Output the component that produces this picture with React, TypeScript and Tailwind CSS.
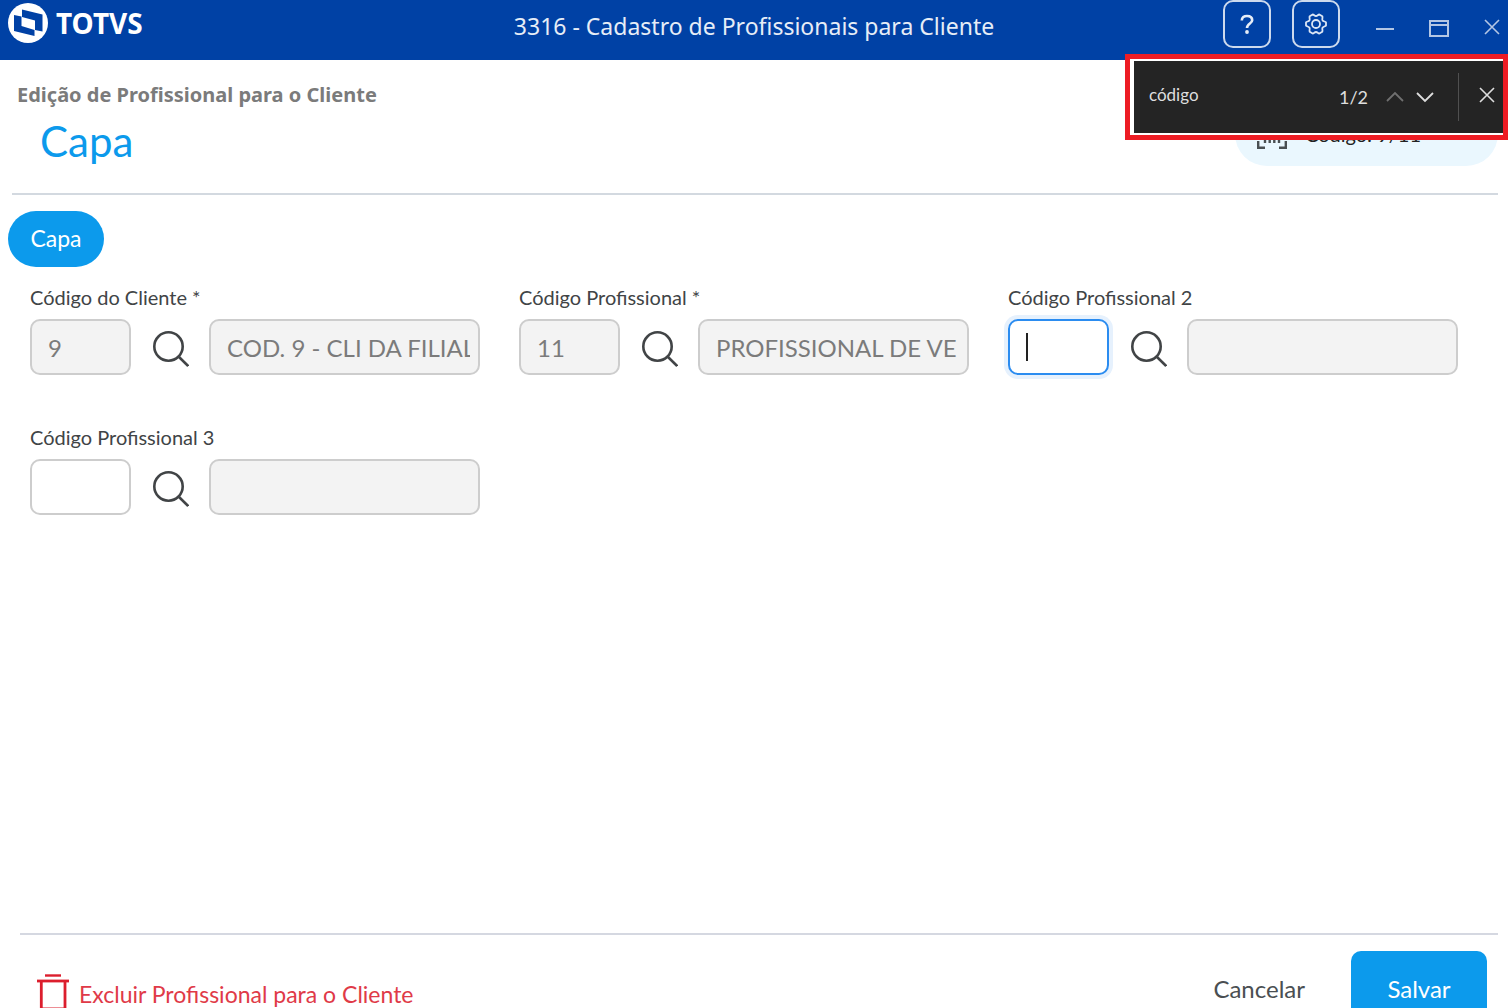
import React, { useState } from "react";

type Lookup = {
  id: string;
  label: string;
  code: string;
  description: string;
  locked?: boolean;
  focused?: boolean;
};

const lookups: Lookup[] = [
  { id: "cliente", label: "Código do Cliente *", code: "9", description: "COD. 9 - CLI DA FILIAL", locked: true },
  { id: "profissional", label: "Código Profissional *", code: "11", description: "PROFISSIONAL DE VE", locked: true },
  { id: "profissional2", label: "Código Profissional 2", code: "", description: "", focused: true },
  { id: "profissional3", label: "Código Profissional 3", code: "", description: "" },
];

const Logo = () => (
  <div className="flex items-center gap-2">
    <svg className="w-10 h-10" viewBox="0 0 40 40" aria-hidden="true">
      <circle cx="20" cy="20" r="20" fill="#fff" />
      <path d="M14 6.500 L34.500 11.500 V28.500 L27 27 V17.500 L14 14 Z" fill="#0041a5" />
      <path d="M6 12 L13.500 13.500 V23 L26.500 27 V33 L6 28 Z" fill="#0041a5" />
    </svg>
    <span className="font-['Noto_Sans',sans-serif] text-[28px] leading-10 font-bold text-white">TOTVS</span>
  </div>
);

const GearIcon = () => (
  <svg className="w-6 h-6" viewBox="0 0 24 24" fill="none" stroke="currentColor" strokeWidth="1.800" strokeLinejoin="round" aria-hidden="true">
    <path d="M8.700 2.500 C10 2.500 10.500 4 12 4 C13.500 4 14 2.500 15.300 2.500 L18.300 4.300 C19 5.600 17.800 6.900 18.500 8.200 C19.300 9.600 21 9.300 22 10.400 L22 13.600 C21 14.700 19.300 14.400 18.500 15.800 C17.800 17.100 19 18.400 18.300 19.700 L15.300 21.500 C14 21.500 13.500 20 12 20 C10.500 20 10 21.500 8.700 21.500 L5.700 19.700 C5 18.400 6.200 17.100 5.500 15.800 C4.700 14.400 3 14.700 2 13.600 L2 10.400 C3 9.300 4.700 9.600 5.500 8.200 C6.200 6.900 5 5.600 5.700 4.300 Z" />
    <circle cx="12" cy="12" r="4" />
  </svg>
);

const SearchIcon = () => (
  <svg className="w-9 h-9" viewBox="0 0 36 36" fill="none" stroke="#414446" strokeWidth="2.600" aria-hidden="true">
    <circle cx="15.500" cy="15.500" r="14.200" />
    <path d="M25.500 25.500 L35.200 35" />
  </svg>
);

const BarcodeIcon = () => (
  <svg className="w-[30px] h-[30px]" viewBox="0 0 30 30" fill="none" stroke="#4a4f52" strokeWidth="2.400" aria-hidden="true">
    <path d="M1.200 8 V1.200 H8 M22 1.200 H28.800 V8 M28.800 22 V28.800 H22 M8 28.800 H1.200 V22" />
    <path d="M8 6 V24 M12.700 6 V24 M17.300 6 V24 M22 6 V24" />
  </svg>
);

const TrashIcon = () => (
  <svg className="w-8 h-10" viewBox="0 0 32 40" fill="none" stroke="#dc1e2d" aria-hidden="true">
    <path d="M8 1.500 H24" strokeWidth="2.400" />
    <path d="M0 7 H32" strokeWidth="2.800" />
    <path d="M4.300 7 V35 H28 V7" strokeWidth="2.800" />
  </svg>
);

const TitleBar = () => (
  <header className="grid grid-cols-[1fr_auto_1fr] items-start h-[60px] shrink-0 bg-[#0041a5] text-white">
    <div className="pl-2 pt-[3px]">
      <Logo />
    </div>
    <h1 className="pt-2 font-['Noto_Sans',sans-serif] text-[23px] leading-9 text-[#e6edf7] whitespace-nowrap">
      3316 - Cadastro de Profissionais para Cliente
    </h1>
    <div className="flex items-start justify-end pr-2">
      <button aria-label="Ajuda" className="w-12 h-12 border-2 border-[#ccd9ed] rounded-[10px] flex items-center justify-center text-[#e6edf7]">
        <svg className="w-6 h-6" viewBox="0 0 24 24" fill="none" stroke="currentColor" strokeWidth="2.600" aria-hidden="true">
          <path d="M6.800 8.500 C6.800 5.400 9 4 12 4 C15.200 4 17.200 5.600 17.200 8.200 C17.200 11.600 12 11.400 12 16" />
          <circle cx="12" cy="20" r="1.900" fill="currentColor" stroke="none" />
        </svg>
      </button>
      <button aria-label="Configurações" className="w-12 h-12 ml-[21px] border-2 border-[#ccd9ed] rounded-[10px] flex items-center justify-center text-[#dce6f5]">
        <GearIcon />
      </button>
      <div className="flex items-center h-14 ml-9 text-[#b3c6e4]">
        <button aria-label="Minimizar">
          <svg className="w-[18px] h-5" viewBox="0 0 18 20" stroke="currentColor" strokeWidth="2">
            <path d="M0 11 H18" />
          </svg>
        </button>
        <button aria-label="Maximizar" className="ml-[35px]">
          <svg className="w-5 h-5" viewBox="0 0 20 20" fill="none" stroke="currentColor" strokeWidth="2">
            <path d="M1 3 H19 V18 H1 Z M1 7 H19" />
          </svg>
        </button>
        <button aria-label="Fechar" className="ml-[35px]">
          <svg className="w-4 h-5" viewBox="0 0 16 20" stroke="currentColor" strokeWidth="1.600">
            <path d="M1 2 L15 16 M15 2 L1 16" />
          </svg>
        </button>
      </div>
    </div>
  </header>
);

const FindBar = () => {
  const [term, setTerm] = useState("código");

  return (
    <div className="absolute right-0 top-[54px] w-[383px] h-[86px] border-[5px] border-[#ed1c24] bg-white pl-1 pt-[2px] pb-[2px]">
      <div className="flex items-center h-full pb-1 bg-[#242424] text-[#dedede]">
        <input
          aria-label="Localizar na página"
          className="w-[150px] ml-[15px] bg-transparent text-[17px] outline-none"
          value={term}
          onChange={(e) => setTerm(e.target.value)}
        />
        <span className="ml-auto pt-1 text-lg">1/2</span>
        <button aria-label="Anterior" className="ml-[18px] pt-1">
          <svg className="w-[18px] h-3" viewBox="0 0 18 12" fill="none" stroke="#707070" strokeWidth="1.800">
            <path d="M1 10 L9 2 L17 10" />
          </svg>
        </button>
        <button aria-label="Próximo" className="ml-3 pt-1">
          <svg className="w-[18px] h-3" viewBox="0 0 18 12" fill="none" stroke="currentColor" strokeWidth="1.800">
            <path d="M1 2 L9 10 L17 2" />
          </svg>
        </button>
        <div className="w-px h-12 ml-6 mt-1 bg-[#505050]" />
        <button aria-label="Fechar busca" className="ml-5 mr-2">
          <svg className="w-4 h-4" viewBox="0 0 16 16" stroke="currentColor" strokeWidth="1.600">
            <path d="M1 1 L15 15 M15 1 L1 15" />
          </svg>
        </button>
      </div>
    </div>
  );
};

const LookupField = ({ field }: { field: Lookup }) => {
  const [code, setCode] = useState(field.code);

  return (
    <div className="pr-[39px]">
      <label htmlFor={field.id} className="block text-xl leading-7 text-[#414446]">
        {field.label}
      </label>
      <div className="flex items-center mt-2">
        <div className="relative w-[101px] shrink-0">
          <input
            id={field.id}
            value={code}
            readOnly={field.locked}
            onChange={(e) => setCode(e.target.value)}
            className={`block w-full h-14 px-4 rounded-[10px] border-2 text-2xl outline-none ${
              field.focused
                ? "border-[#2b8cf0] bg-white ring-4 ring-[#e6f1fd]"
                : field.locked
                  ? "border-[#cdcdcd] bg-[#f3f3f3] text-[#7b7b7b]"
                  : "border-[#cdcdcd] bg-white"
            }`}
          />
          {field.focused && <span className="absolute left-[18px] top-[14px] w-[2px] h-7 bg-[#222]" />}
        </div>
        <button aria-label={`Pesquisar ${field.label}`} className="ml-[22px] mr-5 pt-1">
          <SearchIcon />
        </button>
        <input
          aria-label={`Descrição ${field.label}`}
          value={field.description}
          readOnly
          className="flex-1 min-w-0 h-14 pl-4 pr-2 rounded-[10px] border-2 border-[#cdcdcd] bg-[#f3f3f3] text-2xl text-[#7b7b7b] outline-none"
        />
      </div>
    </div>
  );
};

export default function App() {
  return (
    <div className="relative flex flex-col h-screen overflow-hidden bg-white font-['Lato',sans-serif]">
      <TitleBar />

      <main className="flex-1 min-h-0">
        <div className="flex items-end justify-between ml-3 mr-[10px] h-[135px] border-b-2 border-[#d3d9e0]">
          <div className="self-start pl-[5px] pt-5">
            <p className="font-['Noto_Sans',sans-serif] text-xl leading-[30px] font-bold text-[#7b7b7b]">
              Edição de Profissional para o Cliente
            </p>
            <h2 className="pl-[23px] pt-2 text-[42px] leading-[46px] text-[#0c9aec]">Capa</h2>
          </div>
          <div className="flex items-center w-[263px] h-16 mb-[27px] pl-[22px] gap-[18px] rounded-full bg-[#eaf7fe]">
            <BarcodeIcon />
            <span className="text-xl text-[#222]">Código: 9/11</span>
          </div>
        </div>

        <button className="block mt-4 ml-2 w-24 h-14 pb-[2px] rounded-full bg-[#0c9aec] text-[23px] text-white">Capa</button>

        <form className="grid grid-cols-3 gap-y-12 pl-[30px] pr-[11px] mt-4" onSubmit={(e) => e.preventDefault()}>
          {lookups.map((field) => (
            <LookupField key={field.id} field={field} />
          ))}
        </form>
      </main>

      <footer className="h-[75px] shrink-0 overflow-hidden">
        <div className="flex items-start justify-between ml-5 mr-[10px] border-t-2 border-[#d5d8e1]">
          <button className="flex items-start gap-[10px] ml-[17px] mt-[39px] text-[23px] text-[#e03a48]">
            <TrashIcon />
            <span className="mt-1 leading-8">Excluir Profissional para o Cliente</span>
          </button>
          <div className="flex items-center gap-[46px] mt-4 mr-[11px]">
            <button className="text-2xl text-[#4a4f52]">Cancelar</button>
            <button className="w-[136px] h-[76px] rounded-[10px] bg-[#0c9aec] text-2xl text-white">Salvar</button>
          </div>
        </div>
      </footer>

      <FindBar />
    </div>
  );
}
